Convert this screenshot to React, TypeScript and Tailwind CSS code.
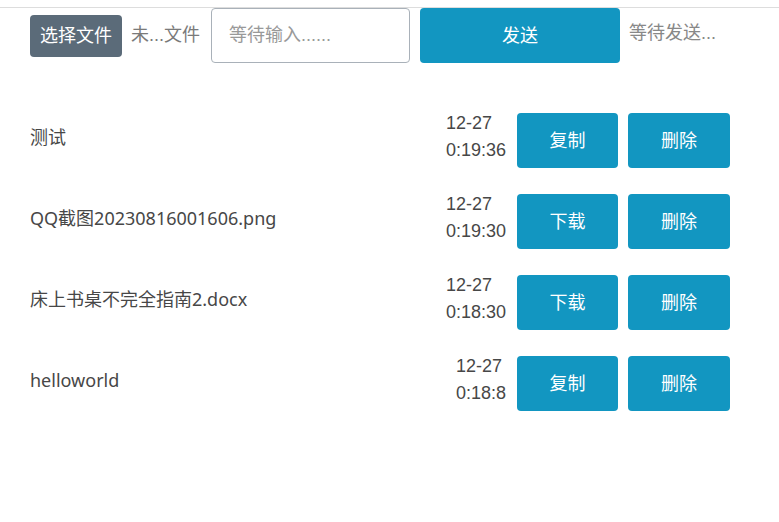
import React from "react";

const font = { fontFamily: '"Liberation Sans", "Noto Sans CJK SC", sans-serif' };

const rows = [
  { name: "测试", date: "12-27", time: "0:19:36", action: "复制" },
  { name: "QQ截图20230816001606.png", date: "12-27", time: "0:19:30", action: "下载" },
  { name: "床上书桌不完全指南2.docx", date: "12-27", time: "0:18:30", action: "下载" },
  { name: "helloworld", date: "12-27", time: "0:18:8", action: "复制" },
];

export default function App() {
  return (
    <div className="w-[779px] h-[522px] bg-white text-[18px]" style={font}>
      <div className="pt-[7px]">
        <div className="border-t border-[#dddddd] px-[30px] flex items-center h-[56px]">
          <button className="w-[92px] h-[42px] bg-[#5b6b79] text-white rounded-[4px] text-[18px] leading-none">
            选择文件
          </button>
          <span className="ml-[9px] text-[#7a7a7a] w-[80px] whitespace-nowrap">未...文件</span>
          <input
            className="w-[199px] h-[55px] border border-[#a9b1b9] rounded-[4px] pl-[17px] text-[18px] outline-none placeholder:text-[#999999]"
            placeholder="等待输入......"
          />
          <button className="ml-[10px] w-[200px] h-[55px] bg-[#1296c1] text-white rounded-[4px] text-[18px] leading-none">
            发送
          </button>
          <span className="ml-[9px] self-start mt-[12px] text-[#888888] whitespace-nowrap">等待发送...</span>
        </div>
      </div>
      <div className="mt-[50px] px-[30px] w-[760px] flex flex-col gap-[26px]">
        {rows.map((r, i) => (
          <div key={i} className="flex items-center h-[55px]">
            <div
              className="flex-1 -mt-[6px] text-[#474747] whitespace-nowrap leading-[27px]"
              style={{ fontFamily: '"Noto Sans", "Noto Sans CJK SC", sans-serif' }}
            >
              {r.name}
            </div>
            <div className="-mt-[7px] text-left text-[#474747] leading-[27px]">
              <div>{r.date}</div>
              <div>{r.time}</div>
            </div>
            <button className="ml-[11px] w-[101px] h-[55px] bg-[#1296c1] text-white rounded-[4px] text-[18px] leading-none">
              {r.action}
            </button>
            <button className="ml-[10px] w-[102px] h-[55px] bg-[#1296c1] text-white rounded-[4px] text-[18px] leading-none">
              删除
            </button>
          </div>
        ))}
      </div>
    </div>
  );
}
